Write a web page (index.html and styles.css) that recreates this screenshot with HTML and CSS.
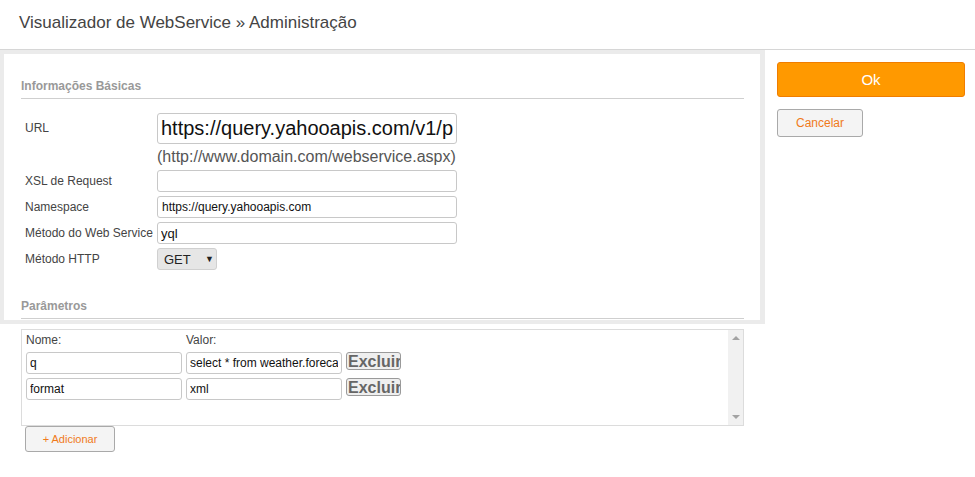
FILE: index.html
```html
<!DOCTYPE html>
<html>
<head>
<meta charset="utf-8">
<title>Visualizador de WebService</title>
<link rel="stylesheet" href="styles.css">
</head>
<body>
<div class="top_bar">Visualizador de WebService &raquo; Administração</div>

<div class="main">
	<div class="left_col">
		<div class="panel">
			<div class="section_title">Informações Básicas</div>

			<div class="form_grid">
				<label class="lbl lbl_url">URL</label>
				<input type="text" class="txt txt_big" value="https://query.yahooapis.com/v1/public/yql"/>
				<span></span>
				<div class="hint">(http://www.domain.com/webservice.aspx)</div>

				<label class="lbl">XSL de Request</label>
				<input type="text" class="txt" value=""/>

				<label class="lbl">Namespace</label>
				<input type="text" class="txt" value="https://query.yahooapis.com"/>

				<label class="lbl">Método do Web Service</label>
				<input type="text" class="txt txt_mid" value="yql"/>

				<label class="lbl">Método HTTP</label>
				<div class="select_box">GET <span class="arrow">&#9660;</span></div>
			</div>

			<div class="section_title section_2">Parâmetros</div>
		</div>

		<div class="param_area">
			<div class="param_box">
				<div class="param_list">
					<div class="param_head">
						<span class="col_name">Nome:</span>
						<span>Valor:</span>
					</div>
					<div class="param_row">
						<input type="text" class="ptxt" value="q"/>
						<input type="text" class="ptxt" value="select * from weather.forecast where woeid=2502265"/>
						<button type="button" class="btn_del">Excluir</button>
					</div>
					<div class="param_row">
						<input type="text" class="ptxt" value="format"/>
						<input type="text" class="ptxt" value="xml"/>
						<button type="button" class="btn_del">Excluir</button>
					</div>
				</div>
				<div class="fake_scroll">
					<span class="tri_up"></span>
					<span class="tri_down"></span>
				</div>
			</div>
			<button type="button" class="btn_add">+ Adicionar</button>
		</div>
	</div>

	<div class="right_col">
		<button type="button" class="btn_ok">Ok</button>
		<button type="button" class="btn_cancel">Cancelar</button>
	</div>
</div>
</body>
</html>
```

FILE: styles.css
```css
body{
	margin:0;
	padding:0;
	background:#fff;
	font-family:"Liberation Sans", Arial, sans-serif;
	color:#444;
}

.top_bar{
	height:50px;
	box-sizing:border-box;
	padding:13px 0 0 19px;
	font-size:17px;
	color:#444;
	border-bottom:1px solid #d6d6d6;
}

.main{
	display:flex;
	align-items:flex-start;
}

.left_col{
	width:765px;
	flex:none;
}
.panel{
	border:4px solid #ebebeb;
	border-right-width:5px;
	background:#fff;
	padding:0 16px 1px 17px;
}

.section_title{
	margin-top:25px;
	padding-bottom:5px;
	border-bottom:1px solid #cfcfcf;
	font-size:12px;
	font-weight:bold;
	color:#999;
}
.section_2{
	margin-top:29px;
}

.form_grid{
	display:grid;
	grid-template-columns:132px 300px;
	row-gap:4px;
	margin:14px 0 0 4px;
	align-items:center;
}
.lbl{
	font-size:12px;
	color:#444;
}
.lbl_url{
	align-self:start;
	padding-top:8px;
}
.txt{
	box-sizing:border-box;
	width:300px;
	height:22px;
	border:1px solid #c8c8c8;
	border-radius:3px;
	padding:2px 4px;
	font-family:"Liberation Sans", Arial, sans-serif;
	font-size:12px;
	color:#111;
	outline:none;
}
.txt_big{
	height:31px;
	font-size:20px;
	padding:2px 3px;
}
.txt_mid{
	font-size:13px;
	padding-left:3px;
}
.hint{
	font-size:16px;
	line-height:18px;
	color:#555;
}

.select_box{
	box-sizing:border-box;
	width:60px;
	height:22px;
	background:#e6e6e6;
	border:1px solid #d0d0d0;
	border-radius:3px;
	font-size:13px;
	color:#222;
	padding:3px 0 0 6px;
}
.select_box .arrow{
	font-size:9px;
	margin-left:11px;
	vertical-align:2px;
}

.param_area{
	padding:5px 21px 0 21px;
}
.param_box{
	display:flex;
	height:95px;
	border:1px solid #dcdcdc;
}
.param_list{
	flex:1;
	padding:3px 4px;
}
.param_head{
	display:flex;
	font-size:12px;
	color:#444;
	height:19px;
}
.col_name{
	width:160px;
}
.param_row{
	display:flex;
	align-items:flex-start;
	gap:4px;
	margin-bottom:4px;
}
.ptxt{
	box-sizing:border-box;
	width:156px;
	height:22px;
	border:1px solid #c8c8c8;
	border-radius:3px;
	padding:2px 3px;
	font-family:"Liberation Sans", Arial, sans-serif;
	font-size:12px;
	color:#111;
	outline:none;
}
.btn_del{
	box-sizing:border-box;
	width:55px;
	height:18px;
	padding:0 1px;
	overflow:hidden;
	white-space:nowrap;
	text-align:left;
	border:1px solid #9a9a9a;
	border-radius:3px;
	background:#efefef;
	font-family:"Liberation Sans", Arial, sans-serif;
	font-size:16px;
	font-weight:bold;
	line-height:15px;
	color:#666;
}

.fake_scroll{
	width:15px;
	background:#f1f1f1;
	display:flex;
	flex-direction:column;
	justify-content:space-between;
	align-items:center;
	padding:6px 0 6px 0;
}
.tri_up{
	border-left:4px solid transparent;
	border-right:4px solid transparent;
	border-bottom:4px solid #a3a3a3;
}
.tri_down{
	border-left:4px solid transparent;
	border-right:4px solid transparent;
	border-top:4px solid #a3a3a3;
}

.btn_add{
	margin-left:4px;
	width:90px;
	height:26px;
	background:#f4f4f4;
	border:1px solid #a9a9a9;
	border-radius:3px;
	font-family:"Liberation Sans", Arial, sans-serif;
	font-size:11px;
	color:#f07a1a;
}

.right_col{
	flex:1;
	padding:12px 10px 0 12px;
	display:flex;
	flex-direction:column;
	align-items:flex-start;
	gap:12px;
}
.btn_ok{
	width:100%;
	height:35px;
	background:#ff9900;
	border:1px solid #f07d00;
	border-radius:3px;
	color:#fff;
	font-family:"Liberation Sans", Arial, sans-serif;
	font-size:15px;
}
.btn_cancel{
	width:86px;
	height:28px;
	background:#f4f4f4;
	border:1px solid #a9a9a9;
	border-radius:3px;
	color:#f07a1a;
	font-family:"Liberation Sans", Arial, sans-serif;
	font-size:12px;
}
```
